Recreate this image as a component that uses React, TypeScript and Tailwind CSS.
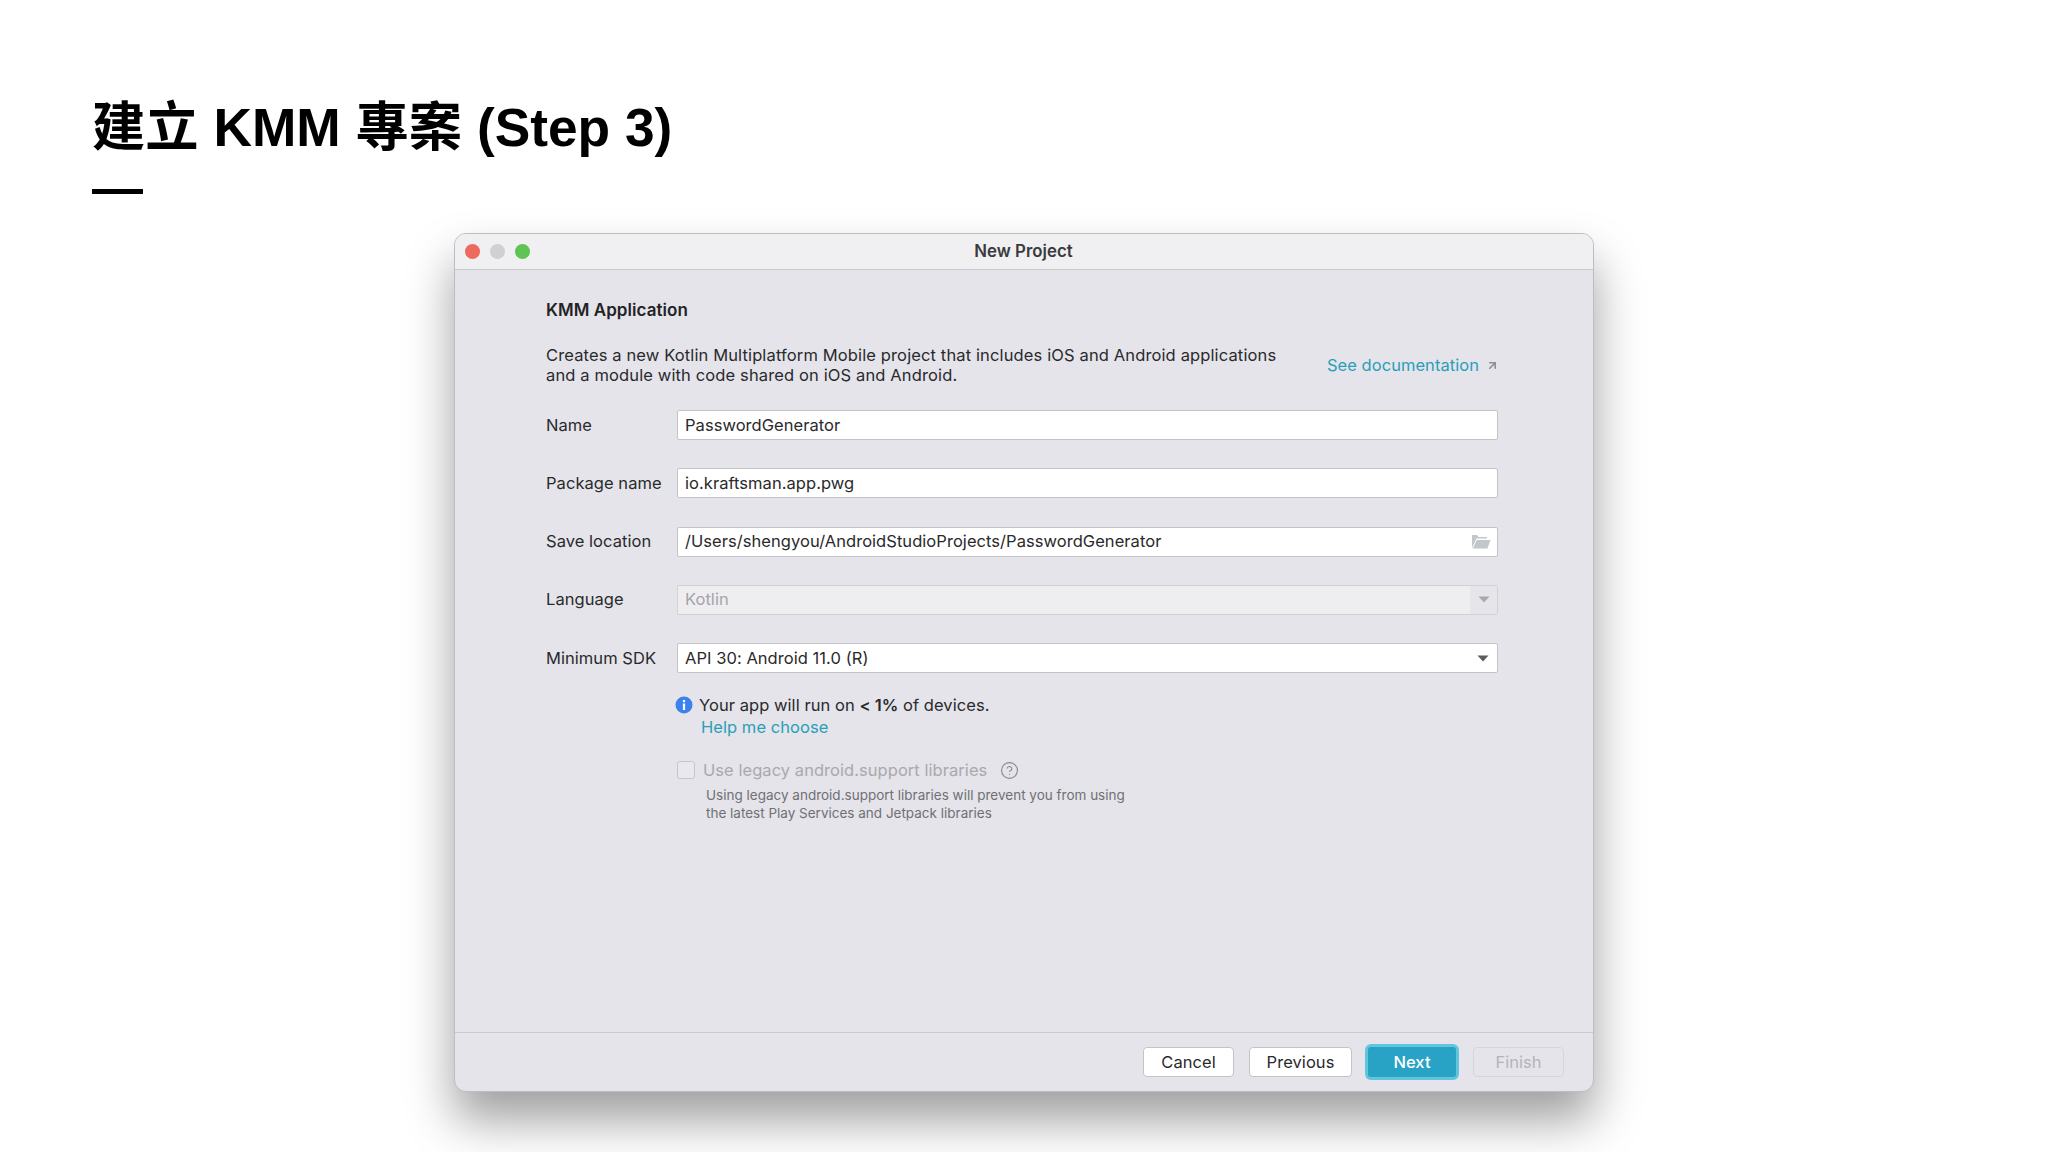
import { ArrowUpRight, CircleHelp } from "lucide-react";

const fieldBase =
  "flex h-[30px] w-[821px] items-center rounded-[2px] border border-[#c4c4c6] bg-white pl-[7px] text-[#2a2a2c]";

function Caret({ color }: { color: string }) {
  return (
    <svg width="12" height="7" viewBox="0 0 12 7">
      <path d="M0.5 0.5h11L6 6.5z" fill={color} />
    </svg>
  );
}

function FolderIcon() {
  return (
    <svg width="20" height="15" viewBox="0 0 20 15">
      <path d="M1 14V1h5l1.5 2H16v1.5H5.5L1 14z" fill="#c3c7c9" />
      <path d="M5.8 6H19.5L16.5 14.5H1.8z" fill="#c3c7c9" />
    </svg>
  );
}

function Row({ label, children }: { label: string; children: React.ReactNode }) {
  return (
    <div className="flex items-center">
      <div className="w-[131px] text-[#2a2a2c]">{label}</div>
      {children}
    </div>
  );
}

export default function App() {
  return (
    <div className="flex h-[1152px] w-full flex-col overflow-hidden bg-white font-['Inter',sans-serif]">
      <div className="pl-[92px] pt-[92px]">
        <h1 className="h-[72px] font-['Liberation_Sans','Noto_Sans_CJK_TC',sans-serif] text-[53.3px] font-bold leading-[72px] text-black">
          建立 KMM 專案 (Step 3)
        </h1>
        <div className="mt-[25px] h-[5px] w-[51px] bg-black" />
      </div>

      <div className="ml-[454px] mt-[39px] flex h-[859px] w-[1140px] flex-col overflow-hidden rounded-[12px] border border-[#bdbdbf] bg-[#e4e4ea] text-[16.5px] tracking-[0.05px] shadow-[0_28px_48px_rgba(0,0,0,0.38)]">
        <div className="flex h-[36px] shrink-0 items-center border-b border-[#c9c9cb] bg-[#f0f0f2] pl-[10px]">
          <div className="flex gap-[10px]">
            <span className="h-[15px] w-[15px] rounded-full bg-[#ee6a5f]" />
            <span className="h-[15px] w-[15px] rounded-full bg-[#d0d0d0]" />
            <span className="h-[15px] w-[15px] rounded-full bg-[#5fc454]" />
          </div>
          <div className="flex-1 pr-[76px] text-center text-[16.8px] font-semibold text-[#3a3a3c]">New Project</div>
        </div>

        <div className="flex flex-1 flex-col pl-[91px] pt-[30px]">
          <div className="h-[20px] text-[17px] leading-[20px] font-semibold text-[#232325]">KMM Application</div>

          <div className="mt-[25px] flex w-[953px] items-center justify-between">
            <p className="leading-[20px] tracking-[0.13px] text-[#2a2a2c]">
              Creates a new Kotlin Multiplatform Mobile project that includes iOS and Android applications
              <br />
              and a module with code shared on iOS and Android.
            </p>
            <div className="flex items-center gap-[7px] text-[#2a9fb8]">
              See documentation
              <ArrowUpRight size={13} strokeWidth={3} className="text-[#8e8e90]" />
            </div>
          </div>

          <div className="mt-[25px] flex flex-col gap-[28.25px]">
            <Row label="Name">
              <div className={fieldBase}>PasswordGenerator</div>
            </Row>
            <Row label="Package name">
              <div className={fieldBase}>io.kraftsman.app.pwg</div>
            </Row>
            <Row label="Save location">
              <div className={`${fieldBase} justify-between pr-[6px]`}>
                /Users/shengyou/AndroidStudioProjects/PasswordGenerator
                <FolderIcon />
              </div>
            </Row>
            <Row label="Language">
              <div className="flex h-[30px] w-[821px] items-center justify-between rounded-[2px] border border-[#d2d2d6] bg-[#eeeef1] text-[#a4a4a8]">
                <span className="pl-[7px]">Kotlin</span>
                <span className="flex h-full w-[27px] items-center justify-center bg-[#e6e6ea]">
                  <Caret color="#a9a9ad" />
                </span>
              </div>
            </Row>
            <Row label="Minimum SDK">
              <div className={`${fieldBase} justify-between pr-[8px]`}>
                API 30: Android 11.0 (R)
                <Caret color="#5c5c5e" />
              </div>
            </Row>
          </div>

          <div className="ml-[129px] mt-[21px] flex flex-col">
            <div className="flex h-[22px] items-center gap-[6px] text-[#2a2a2c]">
              <svg width="18" height="18" viewBox="0 0 18 18">
                <circle cx="9" cy="9" r="8.5" fill="#3b82ec" />
                <rect x="7.9" y="7.5" width="2.2" height="6.5" fill="#fff" />
                <rect x="7.9" y="4" width="2.2" height="2.2" fill="#fff" />
              </svg>
              <span>
                Your app will run on <b className="font-semibold">&lt; 1%</b> of devices.
              </span>
            </div>
            <div className="ml-[26px] h-[23px] leading-[23px] text-[#2a9fb8]">Help me choose</div>

            <div className="ml-[2px] mt-[21px] flex h-[20px] items-center text-[#a9a9ad]">
              <span className="h-[18px] w-[18px] rounded-[3px] border border-[#c6c6ca] bg-[#e9e9ed]" />
              <span className="ml-[8px]">Use legacy android.support libraries</span>
              <CircleHelp size={19} strokeWidth={1.5} className="ml-[13px] text-[#8c8c90]" />
            </div>
            <p className="ml-[31px] mt-[6px] text-[13.5px] leading-[18px] tracking-normal text-[#707074]">
              Using legacy android.support libraries will prevent you from using
              <br />
              the latest Play Services and Jetpack libraries
            </p>
          </div>
        </div>

        <div className="flex h-[59px] shrink-0 items-center justify-end gap-[15px] border-t border-[#c9c9cb] pr-[29px] text-[16.5px]">
          <div className="flex h-[30px] w-[91px] items-center justify-center rounded-[4px] border border-[#c4c4c6] bg-white text-[#2a2a2c]">Cancel</div>
          <div className="flex h-[30px] w-[103px] items-center justify-center rounded-[4px] border border-[#c4c4c6] bg-white text-[#2a2a2c]">Previous</div>
          <div className="ml-[1px] mr-[2px] flex h-[30px] w-[88px] items-center justify-center rounded-[3px] bg-[#28a3c6] font-medium text-white shadow-[0_0_0_3px_#62c5de]">Next</div>
          <div className="flex h-[30px] w-[91px] items-center justify-center rounded-[4px] border border-[#d6d6da] text-[#b4b4b8]">Finish</div>
        </div>
      </div>
    </div>
  );
}
